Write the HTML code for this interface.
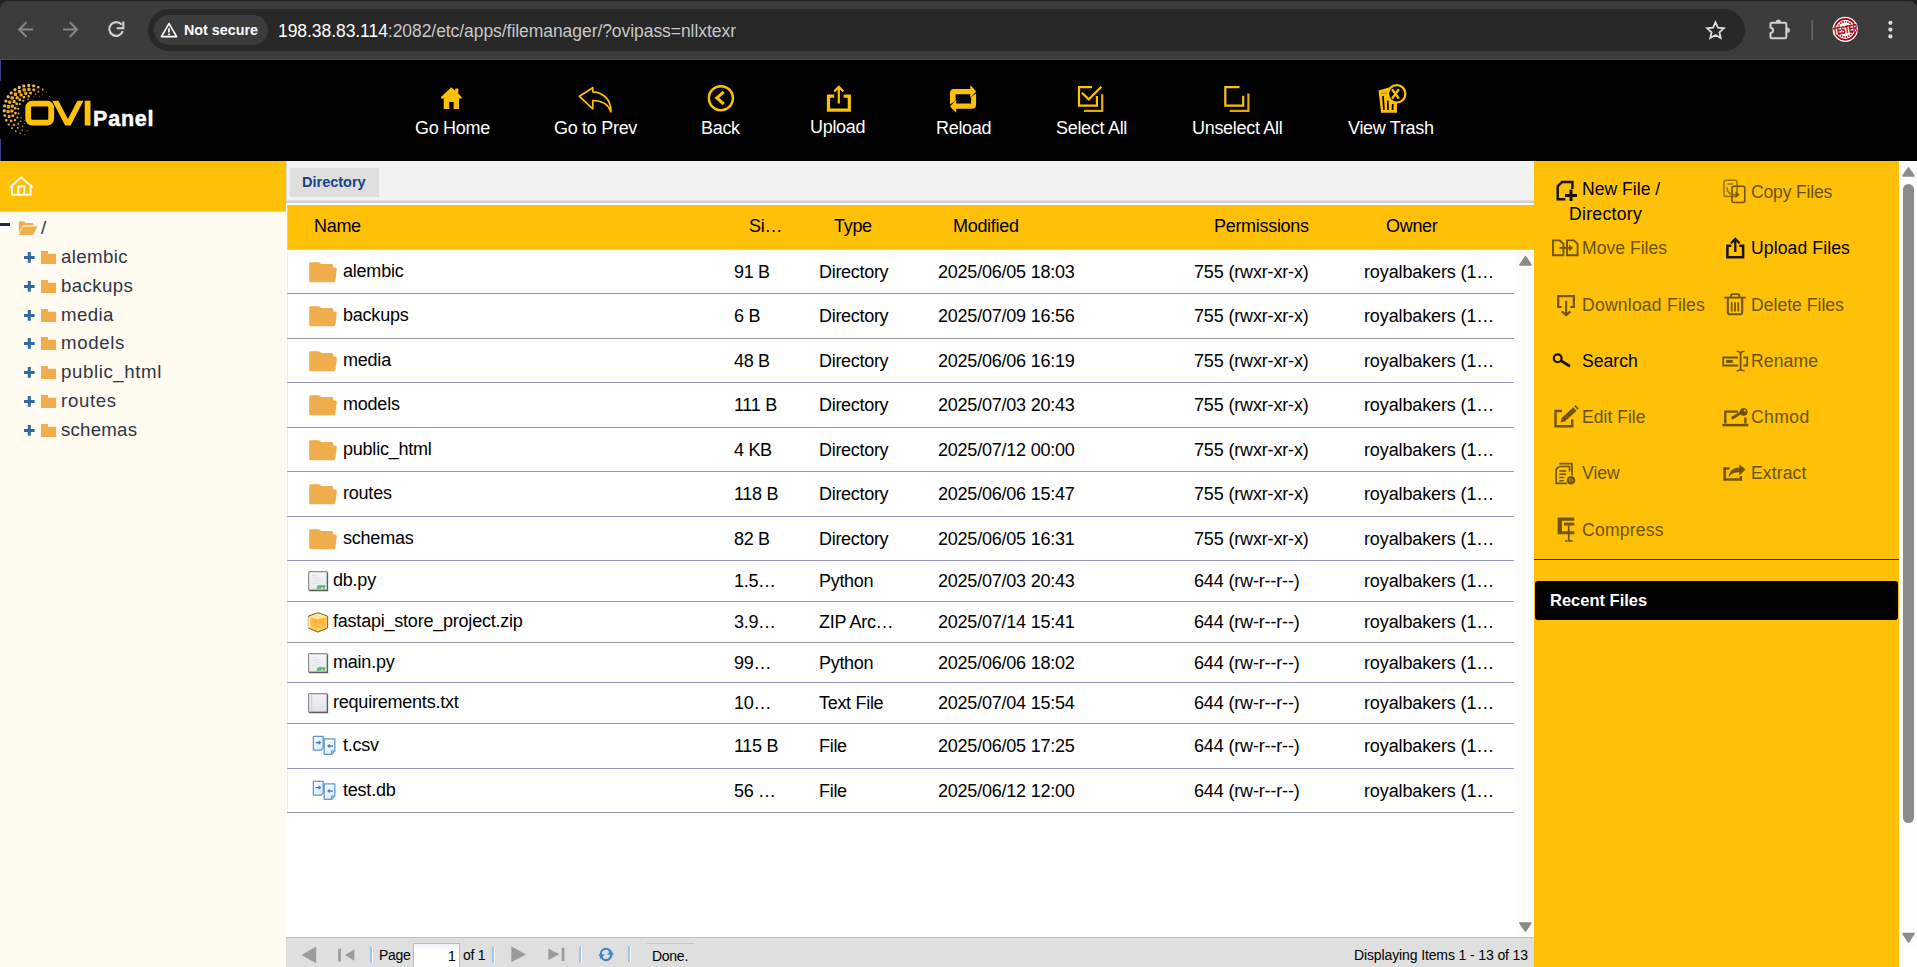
<!DOCTYPE html>
<html>
<head>
<meta charset="utf-8">
<title>File Manager</title>
<style>
*{box-sizing:border-box;margin:0;padding:0}
html,body{width:1917px;height:967px;overflow:hidden;background:#fff}
body{position:relative;font-family:"Liberation Sans",sans-serif;color:#000}
.abs{position:absolute}
svg{display:block;overflow:visible}
/* browser chrome */
#chrome{left:0;top:1px;width:1917px;height:59px;background:#3c3c3c;border-bottom:1px solid #4b4b4b;border-radius:8px 8px 0 0}
#tabstrip{left:0;top:0;width:1917px;height:12px;background:#1f2020}
#omni{left:148px;top:9px;width:1597px;height:42px;border-radius:21px;background:#282828}
#chip{left:154px;top:15px;width:114px;height:30px;border-radius:15px;background:#3c3c3c}
#chip span{position:absolute;left:30px;top:6px;font-size:14.3px;line-height:18px;font-weight:bold;color:#fff;white-space:nowrap}
#url{left:278px;top:20px;font-size:17.5px;letter-spacing:-0.06px;line-height:22px;color:#c7c7c7;white-space:nowrap}
#url b{font-weight:normal;color:#fff}
/* app header */
#hdr{left:0;top:60px;width:1917px;height:101px;background:#000}
.tb{position:absolute;top:117px;color:#fff;font-size:18px;letter-spacing:-0.3px;white-space:nowrap;line-height:22px}
/* left */
#left{left:0;top:161px;width:286px;height:806px;background:#fffbf0}
#lefthd{left:0;top:161px;width:286px;height:50px;background:#ffc107}
.tn{position:absolute;left:61px;font-size:18.67px;letter-spacing:0.4px;color:#2f3545;white-space:nowrap;line-height:24px}
/* center */
#tabbar{left:286px;top:161px;width:1248px;height:41px;background:linear-gradient(#f2f2f2 0,#f2f2f2 38.5px,#dcdcdc 39.5px,#dcdcdc 41px);border-left:1px solid #dadada}
#tabline{left:286px;top:202px;width:1248px;height:3px;background:linear-gradient(#c4c4c4 0,#c4c4c4 1px,#fff 1px,#fff 2px,#eef0f8 3px)}
#tab{left:290px;top:168px;width:89px;height:29px;background:#dedede}
#tab span{position:absolute;left:12px;top:6px;font-size:14.5px;line-height:17px;font-weight:bold;color:#15428b;white-space:nowrap}
#ghd{left:288px;top:205px;width:1246px;height:44px;background:#ffc107}
.gh{position:absolute;top:215px;font-size:18px;letter-spacing:-0.3px;line-height:22px;white-space:nowrap}
#grid{left:286px;top:249px;width:1248px;height:688px;background:#fff}
#gl{left:287px;top:251px;width:1px;height:561px;background:#eee}
#gtop{left:287px;top:249px;width:1247px;height:1px;background:#c9ccdf}
#gleft{left:287px;top:205px;width:1px;height:44px;background:#cdd0e2}
.rl{left:287px;width:1227px;height:1px;background:#9a9ab8}
.c{position:absolute;font-size:18px;letter-spacing:-0.3px;line-height:22px;white-space:nowrap}
#gsb{left:1516px;top:250px;width:17px;height:686px;background:#fcfcfc}
/* pager */
#pager{left:286px;top:937px;width:1248px;height:30px;background:#dfdfdf;border-top:1px solid #c2c2c2}
.pt{position:absolute;font-size:14px;letter-spacing:-0.27px;line-height:18px;white-space:nowrap;color:#000}
.psep{position:absolute;width:3px;background:#9dc3ee;border-right:1.5px solid #fff}
/* right */
#right{left:1534px;top:161px;width:365px;height:806px;background:#ffc107}
.rt{position:absolute;font-size:17.6px;line-height:25px;white-space:nowrap}
.dis{color:#6b5300}
#recent{left:1535px;top:581px;width:363px;height:39px;background:#000;border-radius:3px}
#recent span{position:absolute;left:15px;top:9px;font-size:16.5px;line-height:20px;font-weight:bold;color:#fff;white-space:nowrap}
#sep{left:1534px;top:559px;width:365px;height:1px;background:#1f1f45}
#vsb{left:1899px;top:161px;width:18px;height:786px;background:#fcfcfc}
#thumb{left:1903px;top:184px;width:11px;height:639px;border-radius:5.5px;background:#8b8b8b}

</style>
</head>
<body>
<div id="tabstrip" class="abs"></div>
<div id="chrome" class="abs"></div>
<svg class="abs" style="left:0;top:0" width="160" height="60" viewBox="0 0 160 60">
<g fill="none" stroke="#868686" stroke-width="2.1">
<path d="M33.2 29.5H19.5M26.4 22.3l-7.2 7.2 7.2 7.2"/>
<path d="M63 29.5h13.7M69.8 22.3l7.2 7.2-7.2 7.2"/>
</g>
<path d="M121.6 24.6a6.9 6.9 0 1 0 1.2 6.6" fill="none" stroke="#d2d2d2" stroke-width="2.1"/>
<path d="M123.3 21.6v6.6h-6.6" fill="none" stroke="#d2d2d2" stroke-width="2.1"/>
</svg>
<div id="omni" class="abs"></div>
<div id="chip" class="abs"><span>Not secure</span></div>
<svg class="abs" style="left:158px;top:20px" width="22" height="20" viewBox="0 0 22 20">
<path d="M11 3.6L18.6 16.6H3.4z" fill="none" stroke="#fff" stroke-width="1.7" stroke-linejoin="round"/>
<path d="M11 8.3v4.2M11 13.6v1.7" stroke="#fff" stroke-width="1.7"/>
</svg>
<div id="url" class="abs"><b>198.38.83.114</b>:2082/etc/apps/filemanager/?ovipass=nllxtexr</div>
<svg class="abs" style="left:1700px;top:10px" width="217" height="42" viewBox="0 0 217 42">
<path d="M15.500 12.300l2.450 5.400 5.900.600-4.400 3.950 1.250 5.800-5.200-3-5.200 3 1.250-5.800-4.400-3.950 5.900-.600z" fill="none" stroke="#dcdcdc" stroke-width="1.800" stroke-linejoin="miter"/>
<path d="M71.700 12.800h13.400q1.200 0 1.200 1.200v13.100q0 1.200-1.200 1.200H71.700q-1.200 0-1.200-1.200v-4.100a2.600 2.600 0 0 0 0-5.200v-3.800q0-1.200 1.200-1.200z" fill="none" stroke="#d2d2d2" stroke-width="2" stroke-linejoin="round"/><path d="M75.800 12.100a2.600 2.600 0 0 1 5.200 0z" fill="#d2d2d2"/><path d="M87.200 17.600a2.600 2.600 0 0 1 0 5.200z" fill="#d2d2d2"/>
<rect x="111.300" y="10" width="1.800" height="20" fill="#636363"/>
<circle cx="145.300" cy="19.300" r="12.600" fill="#fff"/>
<circle cx="145.300" cy="19.300" r="10.500" fill="none" stroke="#b5000f" stroke-width="1.700"/>
<circle cx="145.300" cy="19.300" r="7.600" fill="none" stroke="#b5000f" stroke-width="1.600" stroke-dasharray="1.500 1"/>
<rect x="133" y="15.400" width="24.600" height="7.800" fill="#fff" transform="rotate(-10 145.300 19.300)"/>
<text x="145.300" y="23.200" font-family="Liberation Sans, sans-serif" font-weight="bold" font-size="10.500" fill="#a3000d" stroke="#a3000d" stroke-width="0.500" text-anchor="middle" textLength="24.500" lengthAdjust="spacingAndGlyphs" transform="rotate(-10 145.300 19.300)">TESTER</text>
<circle cx="190.400" cy="12.800" r="2.100" fill="#dcdcdc"/>
<circle cx="190.400" cy="19.600" r="2.100" fill="#dcdcdc"/>
<circle cx="190.400" cy="26.400" r="2.100" fill="#dcdcdc"/>
</svg>
<div id="hdr" class="abs"></div>
<div class="abs" style="left:0;top:60px;width:1px;height:21px;background:#3d3d8e"></div>
<div class="abs" style="left:0;top:139px;width:1px;height:22px;background:#3d3d8e"></div>
<svg class="abs" style="left:0;top:60px" width="170" height="100" viewBox="0 60 170 100">
<rect x="49.1" y="95.9" width="0.9" height="0.9" rx="0.3" fill="#e0bd6e" opacity="0.61"/><rect x="45.9" y="92.1" width="1.0" height="1.0" rx="0.3" fill="#e0bd6e" opacity="0.64"/><rect x="41.8" y="88.6" width="1.8" height="1.8" rx="0.5" fill="#e0bd6e" opacity="0.83"/><rect x="37.1" y="86.0" width="2.4" height="2.4" rx="0.7" fill="#e0bd6e" opacity="0.99"/><rect x="32.2" y="84.4" width="2.9" height="2.9" rx="0.9" fill="#e0bd6e" opacity="1.00"/><rect x="27.3" y="84.0" width="2.9" height="2.9" rx="0.9" fill="#e0bd6e" opacity="1.00"/><rect x="22.4" y="84.5" width="2.9" height="2.9" rx="0.9" fill="#e0bd6e" opacity="1.00"/><rect x="17.8" y="86.0" width="2.9" height="2.9" rx="0.9" fill="#e0bd6e" opacity="1.00"/><rect x="13.5" y="88.3" width="2.9" height="2.9" rx="0.9" fill="#e0bd6e" opacity="1.00"/><rect x="9.7" y="91.5" width="2.9" height="2.9" rx="0.9" fill="#e0bd6e" opacity="1.00"/><rect x="6.7" y="95.3" width="2.9" height="2.9" rx="0.9" fill="#e0bd6e" opacity="1.00"/><rect x="4.5" y="99.7" width="2.9" height="2.9" rx="0.9" fill="#e0bd6e" opacity="1.00"/><rect x="3.1" y="104.4" width="2.9" height="2.9" rx="0.9" fill="#e0bd6e" opacity="1.00"/><rect x="2.8" y="109.3" width="2.9" height="2.9" rx="0.9" fill="#e0bd6e" opacity="1.00"/><rect x="3.5" y="114.2" width="2.6" height="2.6" rx="0.8" fill="#e0bd6e" opacity="1.00"/><rect x="5.1" y="119.0" width="2.4" height="2.4" rx="0.7" fill="#e0bd6e" opacity="0.98"/><rect x="7.6" y="123.4" width="2.2" height="2.2" rx="0.7" fill="#e0bd6e" opacity="0.92"/><rect x="10.9" y="127.2" width="1.9" height="1.9" rx="0.6" fill="#e0bd6e" opacity="0.87"/><rect x="14.9" y="130.3" width="1.7" height="1.7" rx="0.5" fill="#e0bd6e" opacity="0.81"/><rect x="19.4" y="132.6" width="1.5" height="1.5" rx="0.4" fill="#e0bd6e" opacity="0.76"/><rect x="24.2" y="134.0" width="1.3" height="1.3" rx="0.4" fill="#e0bd6e" opacity="0.70"/><rect x="42.0" y="93.8" width="1.0" height="1.0" rx="0.3" fill="#f3a822" opacity="0.61"/><rect x="37.5" y="90.6" width="1.9" height="1.9" rx="0.6" fill="#f3a822" opacity="0.80"/><rect x="32.4" y="88.4" width="2.9" height="2.9" rx="0.9" fill="#f3a822" opacity="1.00"/><rect x="27.3" y="87.7" width="3.3" height="3.3" rx="1.0" fill="#f3a822" opacity="1.00"/><rect x="22.5" y="88.2" width="3.3" height="3.3" rx="1.0" fill="#f3a822" opacity="1.00"/><rect x="17.9" y="89.9" width="3.3" height="3.3" rx="1.0" fill="#f3a822" opacity="1.00"/><rect x="13.8" y="92.6" width="3.3" height="3.3" rx="1.0" fill="#f3a822" opacity="1.00"/><rect x="10.5" y="96.2" width="3.3" height="3.3" rx="1.0" fill="#f3a822" opacity="1.00"/><rect x="8.1" y="100.4" width="3.3" height="3.3" rx="1.0" fill="#f3a822" opacity="1.00"/><rect x="6.7" y="105.1" width="3.3" height="3.3" rx="1.0" fill="#f3a822" opacity="1.00"/><rect x="6.5" y="110.1" width="3.2" height="3.2" rx="1.0" fill="#f3a822" opacity="1.00"/><rect x="7.6" y="115.0" width="2.9" height="2.9" rx="0.9" fill="#f3a822" opacity="1.00"/><rect x="9.8" y="119.6" width="2.6" height="2.6" rx="0.8" fill="#f3a822" opacity="0.95"/><rect x="12.9" y="123.7" width="2.3" height="2.3" rx="0.7" fill="#f3a822" opacity="0.88"/><rect x="16.9" y="126.9" width="1.9" height="1.9" rx="0.6" fill="#f3a822" opacity="0.81"/><rect x="21.5" y="129.2" width="1.6" height="1.6" rx="0.5" fill="#f3a822" opacity="0.74"/><rect x="26.4" y="130.3" width="1.4" height="1.4" rx="0.4" fill="#f3a822" opacity="0.69"/><rect x="39.1" y="96.2" width="0.9" height="0.9" rx="0.3" fill="#f7ae1c" opacity="0.61"/><rect x="34.6" y="93.4" width="1.6" height="1.6" rx="0.5" fill="#f7ae1c" opacity="0.75"/><rect x="29.2" y="91.7" width="2.7" height="2.7" rx="0.8" fill="#f7ae1c" opacity="1.00"/><rect x="24.2" y="91.8" width="3.1" height="3.1" rx="0.9" fill="#f7ae1c" opacity="1.00"/><rect x="19.6" y="93.4" width="3.1" height="3.1" rx="0.9" fill="#f7ae1c" opacity="1.00"/><rect x="15.6" y="96.2" width="3.1" height="3.1" rx="0.9" fill="#f7ae1c" opacity="1.00"/><rect x="12.6" y="100.0" width="3.1" height="3.1" rx="0.9" fill="#f7ae1c" opacity="1.00"/><rect x="10.7" y="104.6" width="3.1" height="3.1" rx="0.9" fill="#f7ae1c" opacity="1.00"/><rect x="10.3" y="109.4" width="3.1" height="3.1" rx="0.9" fill="#f7ae1c" opacity="1.00"/><rect x="11.4" y="114.4" width="2.7" height="2.7" rx="0.8" fill="#f7ae1c" opacity="1.00"/><rect x="13.8" y="119.0" width="2.3" height="2.3" rx="0.7" fill="#f7ae1c" opacity="0.93"/><rect x="17.3" y="122.7" width="2.0" height="2.0" rx="0.6" fill="#f7ae1c" opacity="0.84"/><rect x="21.7" y="125.4" width="1.6" height="1.6" rx="0.5" fill="#f7ae1c" opacity="0.75"/><rect x="33.0" y="96.6" width="0.9" height="0.9" rx="0.3" fill="#f0b232" opacity="0.65"/><rect x="27.6" y="95.2" width="2.3" height="2.3" rx="0.7" fill="#f0b232" opacity="1.00"/><rect x="22.6" y="96.0" width="2.6" height="2.6" rx="0.8" fill="#f0b232" opacity="1.00"/><rect x="18.5" y="98.5" width="2.6" height="2.6" rx="0.8" fill="#f0b232" opacity="1.00"/><rect x="15.4" y="102.4" width="2.6" height="2.6" rx="0.8" fill="#f0b232" opacity="1.00"/><rect x="13.9" y="107.0" width="2.6" height="2.6" rx="0.8" fill="#f0b232" opacity="1.00"/><rect x="14.2" y="111.9" width="2.5" height="2.5" rx="0.7" fill="#f0b232" opacity="1.00"/><rect x="16.3" y="116.6" width="2.0" height="2.0" rx="0.6" fill="#f0b232" opacity="0.95"/><rect x="19.8" y="120.5" width="1.6" height="1.6" rx="0.5" fill="#f0b232" opacity="0.83"/><rect x="24.3" y="122.9" width="1.2" height="1.2" rx="0.4" fill="#f0b232" opacity="0.72"/><rect x="32.5" y="99.6" width="0.6" height="0.6" rx="0.2" fill="#d9a73a" opacity="0.61"/><rect x="27.2" y="98.5" width="1.6" height="1.6" rx="0.5" fill="#d9a73a" opacity="0.95"/><rect x="22.3" y="99.8" width="2.0" height="2.0" rx="0.6" fill="#d9a73a" opacity="1.00"/><rect x="18.8" y="103.1" width="2.0" height="2.0" rx="0.6" fill="#d9a73a" opacity="1.00"/><rect x="17.1" y="107.7" width="2.0" height="2.0" rx="0.6" fill="#d9a73a" opacity="1.00"/><rect x="17.6" y="112.6" width="1.8" height="1.8" rx="0.5" fill="#d9a73a" opacity="1.00"/><rect x="20.3" y="117.0" width="1.4" height="1.4" rx="0.4" fill="#d9a73a" opacity="0.89"/><rect x="24.5" y="120.0" width="1.0" height="1.0" rx="0.3" fill="#d9a73a" opacity="0.73"/>
<rect x="28.200" y="103.600" width="23" height="19" rx="3.800" fill="none" stroke="#ffc107" stroke-width="5.800"/>
<path d="M52.300 100.700h6.100l9.500 18.300 9.500-18.300h6.100l-12.900 24.800h-5.400z" fill="#ffc107"/>
<rect x="84.700" y="100.700" width="5.800" height="24.800" fill="#ffc107"/>
</svg>
<div class="abs" style="left:93px;top:106px;font-size:21.500px;line-height:26px;font-weight:bold;color:#fff;letter-spacing:0.800px;white-space:nowrap;-webkit-text-stroke:0.500px #fff">Panel</div>
<svg class="abs" style="left:400px;top:78px" width="1100" height="40" viewBox="400 78 1100 40">
<g fill="#ffc107">
<path d="M451.300 87.200l3.900 3.600v-2.300h3.100v5.200l3.400 3.200v1.500h-2.700v10.700h-5.400v-7.100h-4.400v7.100h-5.500v-10.700h-2.700v-1.500z"/>
</g>
<g fill="none" stroke="#ffc107" stroke-width="1.700" stroke-linejoin="round">
<path d="M579.400 96.300l13.400-8.600v4.100c10.500.6 18.200 7.800 18.200 20-2.600-7.300-9.300-11.300-18.200-11.300v8.300z"/>
</g>
<circle cx="720.900" cy="98.200" r="12" fill="none" stroke="#ffc107" stroke-width="2.500"/>
<path d="M723.800 91.800l-7 6.100 7 6.100" fill="none" stroke="#ffc107" stroke-width="3"/>
<g fill="none" stroke="#ffc107">
<path d="M834.200 96.200h-5.700v13.900h20.800v-13.900h-5.700" stroke-width="3.200"/>
<path d="M838.800 103.600v-16.500" stroke-width="2.200"/>
<path d="M834.200 91.500l4.600-4.700 4.600 4.700" stroke-width="2.200"/>
</g>
<g fill="#ffc107">
<path d="M954 89h16.300v-3.900l5.900 6.300-5.900 6.300v-3.500h-14.700v6.500l-5.600 3.700v-11.400q0-4 4-4z"/>
<path d="M972 108.800h-15.800v3.900l-6.200-6.300 6.200-6.300v3.500h14.900v-6.500l5-3.700v11.400q0 4-4.100 4z"/>
</g>
<g fill="none" stroke="#ffc107">
<path d="M1092 87.200h-13v18.400h17.900v-9.600" stroke-width="2.200"/>
<path d="M1084 110.900h18.200v-16.700" stroke-width="2.200" stroke="#e0aa06"/>
<path d="M1082 92.700l6.700 6.700 12.700-12.600" stroke-width="2.200"/>
<path d="M1239.500 87.200h-14.200v18.400h17.900v-9.900" stroke-width="2.200"/>
<path d="M1229.600 110.900h18.800v-17.300" stroke-width="2.200" stroke="#e0aa06"/>
</g>
<g>
<path d="M1378.500 90.600l10.500-3.200 8 5.500v19.900h-15.900z" fill="#ffc107"/>
<path d="M1380.800 93.600l7-.8" stroke="#b88a00" stroke-width="1" fill="none"/>
<path d="M1383 96l.9 14M1387.800 100.500l.2 9.500M1392.800 104l-.3 6" stroke="#000" stroke-width="1.700" fill="none"/>
<circle cx="1396.700" cy="93.800" r="8.700" fill="#000" stroke="#ffc107" stroke-width="2.200"/>
<path d="M1392 89.300l6.900 9.300M1398.900 89.300l-6.900 9.300" stroke="#ffc107" stroke-width="2.400" fill="none"/>
</g>
</svg>
<div class="tb" style="left:415px">Go Home</div>
<div class="tb" style="left:554px">Go to Prev</div>
<div class="tb" style="left:701px">Back</div>
<div class="tb" style="left:810px;top:116px">Upload</div>
<div class="tb" style="left:936px">Reload</div>
<div class="tb" style="left:1056px">Select All</div>
<div class="tb" style="left:1192px">Unselect All</div>
<div class="tb" style="left:1348px">View Trash</div>
<div id="left" class="abs"></div>
<div id="lefthd" class="abs"></div>
<div class="abs" style="left:0;top:211px;width:286px;height:1px;background:#d8d3c4"></div>
<svg class="abs" style="left:8px;top:174px" width="28" height="24" viewBox="8 174 28 24">
<g fill="none" stroke="#fffbe8" stroke-width="2">
<path d="M9.800 187.600l11.400-10.300 11.400 10.300"/>
<path d="M12 185.800v9h18.600v-9"/>
<path d="M18.300 194.800v-8.400h5.800v8.400"/>
</g>
</svg>
<div class="abs" style="left:0;top:218px;width:11px;height:13px;background:#fff"></div>
<div class="abs" style="left:0;top:223px;width:10px;height:3px;background:#2b2b33"></div>
<svg class="abs" style="left:18px;top:221px" width="20" height="15" viewBox="0 0 20 15">
<path d="M1.400 0.300h4.600l1.700 1.700h6.600q1 0 1 1v1.500h-9.300q-1 0-1.500.9l-3.700 6.800v-10.900q0-1 1-1z" fill="#efad4c"/>
<path d="M6 5.600h12.600q.9 0 .4.900l-3.600 6.700q-.5.900-1.500.9H1.600q-.9 0-.4-.900l3.400-6.600q.5-1 1.400-1z" fill="#efad4c"/>
</svg>
<div class="tn" style="left:41px;top:216px">/</div>
<svg class="abs" style="left:24px;top:251px" width="33" height="14" viewBox="0 0 33 14"><path d="M0 6.500h10.600M5.300 1.100v10.600" stroke="#2f6ca3" stroke-width="3.100" fill="none"/><path d="M17 0.100h6.500q.6 0 .6.600v2h7.300q.700 0 .700.700v8.900q0 .6-.6.600H17.600q-.6 0-.6-.6z" fill="#efad4c"/></svg>
<div class="tn" style="top:245px;letter-spacing:0.4px">alembic</div>
<svg class="abs" style="left:24px;top:280px" width="33" height="14" viewBox="0 0 33 14"><path d="M0 6.500h10.600M5.300 1.100v10.600" stroke="#2f6ca3" stroke-width="3.100" fill="none"/><path d="M17 0.100h6.500q.6 0 .6.600v2h7.300q.700 0 .700.700v8.900q0 .6-.6.600H17.600q-.6 0-.6-.6z" fill="#efad4c"/></svg>
<div class="tn" style="top:274px;letter-spacing:0.4px">backups</div>
<svg class="abs" style="left:24px;top:309px" width="33" height="14" viewBox="0 0 33 14"><path d="M0 6.500h10.600M5.300 1.100v10.600" stroke="#2f6ca3" stroke-width="3.100" fill="none"/><path d="M17 0.100h6.500q.6 0 .6.600v2h7.300q.700 0 .700.700v8.900q0 .6-.6.600H17.600q-.6 0-.6-.6z" fill="#efad4c"/></svg>
<div class="tn" style="top:303px;letter-spacing:0.4px">media</div>
<svg class="abs" style="left:24px;top:337px" width="33" height="14" viewBox="0 0 33 14"><path d="M0 6.500h10.600M5.300 1.100v10.600" stroke="#2f6ca3" stroke-width="3.100" fill="none"/><path d="M17 0.100h6.500q.6 0 .6.600v2h7.300q.700 0 .700.700v8.900q0 .6-.6.600H17.600q-.6 0-.6-.6z" fill="#efad4c"/></svg>
<div class="tn" style="top:331px;letter-spacing:0.63px">models</div>
<svg class="abs" style="left:24px;top:366px" width="33" height="14" viewBox="0 0 33 14"><path d="M0 6.500h10.600M5.300 1.100v10.600" stroke="#2f6ca3" stroke-width="3.100" fill="none"/><path d="M17 0.100h6.500q.6 0 .6.600v2h7.300q.700 0 .700.700v8.900q0 .6-.6.600H17.600q-.6 0-.6-.6z" fill="#efad4c"/></svg>
<div class="tn" style="top:360px;letter-spacing:0.6px">public_html</div>
<svg class="abs" style="left:24px;top:395px" width="33" height="14" viewBox="0 0 33 14"><path d="M0 6.500h10.600M5.300 1.100v10.600" stroke="#2f6ca3" stroke-width="3.100" fill="none"/><path d="M17 0.100h6.500q.6 0 .6.600v2h7.300q.700 0 .700.700v8.900q0 .6-.6.600H17.600q-.6 0-.6-.6z" fill="#efad4c"/></svg>
<div class="tn" style="top:389px;letter-spacing:0.67px">routes</div>
<svg class="abs" style="left:24px;top:424px" width="33" height="14" viewBox="0 0 33 14"><path d="M0 6.500h10.600M5.300 1.100v10.600" stroke="#2f6ca3" stroke-width="3.100" fill="none"/><path d="M17 0.100h6.500q.6 0 .6.600v2h7.300q.700 0 .700.700v8.900q0 .6-.6.600H17.600q-.6 0-.6-.6z" fill="#efad4c"/></svg>
<div class="tn" style="top:418px;letter-spacing:0.23px">schemas</div>
<div id="tabbar" class="abs"></div>
<div id="tabline" class="abs"></div>
<div id="tab" class="abs"><span>Directory</span></div>
<div id="ghd" class="abs"></div>
<div class="gh" style="left:314px">Name</div>
<div class="gh" style="left:749px">Si…</div>
<div class="gh" style="left:834px">Type</div>
<div class="gh" style="left:953px">Modified</div>
<div class="gh" style="left:1214px">Permissions</div>
<div class="gh" style="left:1386px">Owner</div>
<div id="grid" class="abs"></div>
<div id="gl" class="abs"></div>
<div id="gtop" class="abs"></div>
<div id="gleft" class="abs"></div>
<div id="gsb" class="abs"></div>
<svg class="abs" style="left:1516px;top:250px" width="17" height="686" viewBox="1516 250 17 686">
<path d="M1525.500 256.600l5.600 8.300h-11.200z" fill="#8b8b8b" stroke="#8b8b8b" stroke-width="1.600" stroke-linejoin="round"/>
<path d="M1525.400 931l-5.500-8h11z" fill="#8b8b8b" stroke="#8b8b8b" stroke-width="1.600" stroke-linejoin="round"/>
</svg>
<svg width="0" height="0" style="position:absolute"><defs><linearGradient id="gdoc" x1="0" y1="0" x2="1" y2="1"><stop offset="0" stop-color="#ffffff"/><stop offset="1" stop-color="#d5e6f7"/></linearGradient><linearGradient id="gpy" x1="0" y1="0" x2="0" y2="1"><stop offset="0" stop-color="#f4f5f6"/><stop offset="1" stop-color="#e6e8ea"/></linearGradient><linearGradient id="gtxt" x1="0" y1="0" x2="0" y2="1"><stop offset="0" stop-color="#f1f1f6"/><stop offset="1" stop-color="#e2e3ea"/></linearGradient><radialGradient id="gzip" cx="0.5" cy="0.45" r="0.65"><stop offset="0" stop-color="#ffa726"/><stop offset="0.55" stop-color="#ffc24a"/><stop offset="1" stop-color="#ffe49a"/></radialGradient></defs></svg>
<div class="rl abs" style="top:293px"></div>
<svg class="abs" style="left:309px;top:262px" width="28" height="21" viewBox="0 0 28 21"><path d="M1.600 0.200h7.700q.9 0 1.500.6l1.300 1.200h10.400q1.800 0 1.800 1.700v1.700h1.700q2.100 0 1.800 2l-1.500 11.300q-.3 1.600-2 1.600H1.700q-1.500 0-1.500-1.500V1.600q0-1.400 1.400-1.400z" fill="#efad4c"/></svg>
<div class="c" style="left:343px;top:260px;letter-spacing:-0.22px">alembic</div><div class="c" style="left:734px;top:261px">91 B</div><div class="c" style="left:819px;top:261px">Directory</div><div class="c" style="left:938px;top:261px;letter-spacing:-0.22px">2025/06/05 18:03</div><div class="c" style="left:1194px;top:261px;letter-spacing:-0.16px">755 (rwxr-xr-x)</div><div class="c" style="left:1364px;top:261px;letter-spacing:-0.12px">royalbakers (1…</div>
<div class="rl abs" style="top:338px"></div>
<svg class="abs" style="left:309px;top:306px" width="28" height="21" viewBox="0 0 28 21"><path d="M1.600 0.200h7.700q.9 0 1.500.6l1.300 1.200h10.400q1.800 0 1.800 1.700v1.700h1.700q2.100 0 1.800 2l-1.500 11.300q-.3 1.600-2 1.600H1.700q-1.500 0-1.500-1.500V1.600q0-1.400 1.400-1.400z" fill="#efad4c"/></svg>
<div class="c" style="left:343px;top:304px;letter-spacing:-0.22px">backups</div><div class="c" style="left:734px;top:305px">6 B</div><div class="c" style="left:819px;top:305px">Directory</div><div class="c" style="left:938px;top:305px;letter-spacing:-0.22px">2025/07/09 16:56</div><div class="c" style="left:1194px;top:305px;letter-spacing:-0.16px">755 (rwxr-xr-x)</div><div class="c" style="left:1364px;top:305px;letter-spacing:-0.12px">royalbakers (1…</div>
<div class="rl abs" style="top:382px"></div>
<svg class="abs" style="left:309px;top:351px" width="28" height="21" viewBox="0 0 28 21"><path d="M1.600 0.200h7.700q.9 0 1.500.6l1.300 1.200h10.400q1.800 0 1.800 1.700v1.700h1.700q2.100 0 1.800 2l-1.500 11.300q-.3 1.600-2 1.600H1.700q-1.500 0-1.500-1.500V1.600q0-1.400 1.400-1.400z" fill="#efad4c"/></svg>
<div class="c" style="left:343px;top:349px;letter-spacing:-0.22px">media</div><div class="c" style="left:734px;top:350px">48 B</div><div class="c" style="left:819px;top:350px">Directory</div><div class="c" style="left:938px;top:350px;letter-spacing:-0.22px">2025/06/06 16:19</div><div class="c" style="left:1194px;top:350px;letter-spacing:-0.16px">755 (rwxr-xr-x)</div><div class="c" style="left:1364px;top:350px;letter-spacing:-0.12px">royalbakers (1…</div>
<div class="rl abs" style="top:427px"></div>
<svg class="abs" style="left:309px;top:395px" width="28" height="21" viewBox="0 0 28 21"><path d="M1.600 0.200h7.700q.9 0 1.500.6l1.300 1.200h10.400q1.800 0 1.800 1.700v1.700h1.700q2.100 0 1.800 2l-1.500 11.300q-.3 1.600-2 1.600H1.700q-1.500 0-1.500-1.500V1.600q0-1.400 1.400-1.400z" fill="#efad4c"/></svg>
<div class="c" style="left:343px;top:393px;letter-spacing:-0.22px">models</div><div class="c" style="left:734px;top:394px">111 B</div><div class="c" style="left:819px;top:394px">Directory</div><div class="c" style="left:938px;top:394px;letter-spacing:-0.22px">2025/07/03 20:43</div><div class="c" style="left:1194px;top:394px;letter-spacing:-0.16px">755 (rwxr-xr-x)</div><div class="c" style="left:1364px;top:394px;letter-spacing:-0.12px">royalbakers (1…</div>
<div class="rl abs" style="top:471px"></div>
<svg class="abs" style="left:309px;top:440px" width="28" height="21" viewBox="0 0 28 21"><path d="M1.600 0.200h7.700q.9 0 1.500.6l1.300 1.200h10.400q1.800 0 1.800 1.700v1.700h1.700q2.100 0 1.800 2l-1.500 11.300q-.3 1.600-2 1.600H1.700q-1.500 0-1.500-1.500V1.600q0-1.400 1.400-1.400z" fill="#efad4c"/></svg>
<div class="c" style="left:343px;top:438px;letter-spacing:-0.22px">public_html</div><div class="c" style="left:734px;top:439px">4 KB</div><div class="c" style="left:819px;top:439px">Directory</div><div class="c" style="left:938px;top:439px;letter-spacing:-0.22px">2025/07/12 00:00</div><div class="c" style="left:1194px;top:439px;letter-spacing:-0.16px">755 (rwxr-xr-x)</div><div class="c" style="left:1364px;top:439px;letter-spacing:-0.12px">royalbakers (1…</div>
<div class="rl abs" style="top:516px"></div>
<svg class="abs" style="left:309px;top:484px" width="28" height="21" viewBox="0 0 28 21"><path d="M1.600 0.200h7.700q.9 0 1.500.6l1.300 1.200h10.400q1.800 0 1.800 1.700v1.700h1.700q2.100 0 1.800 2l-1.500 11.300q-.3 1.600-2 1.600H1.700q-1.500 0-1.500-1.500V1.600q0-1.400 1.400-1.400z" fill="#efad4c"/></svg>
<div class="c" style="left:343px;top:482px;letter-spacing:-0.22px">routes</div><div class="c" style="left:734px;top:483px">118 B</div><div class="c" style="left:819px;top:483px">Directory</div><div class="c" style="left:938px;top:483px;letter-spacing:-0.22px">2025/06/06 15:47</div><div class="c" style="left:1194px;top:483px;letter-spacing:-0.16px">755 (rwxr-xr-x)</div><div class="c" style="left:1364px;top:483px;letter-spacing:-0.12px">royalbakers (1…</div>
<div class="rl abs" style="top:560px"></div>
<svg class="abs" style="left:309px;top:529px" width="28" height="21" viewBox="0 0 28 21"><path d="M1.600 0.200h7.700q.9 0 1.500.6l1.300 1.200h10.400q1.800 0 1.800 1.700v1.700h1.700q2.100 0 1.800 2l-1.500 11.300q-.3 1.600-2 1.600H1.700q-1.500 0-1.500-1.500V1.600q0-1.400 1.400-1.400z" fill="#efad4c"/></svg>
<div class="c" style="left:343px;top:527px;letter-spacing:-0.22px">schemas</div><div class="c" style="left:734px;top:528px">82 B</div><div class="c" style="left:819px;top:528px">Directory</div><div class="c" style="left:938px;top:528px;letter-spacing:-0.22px">2025/06/05 16:31</div><div class="c" style="left:1194px;top:528px;letter-spacing:-0.16px">755 (rwxr-xr-x)</div><div class="c" style="left:1364px;top:528px;letter-spacing:-0.12px">royalbakers (1…</div>
<div class="rl abs" style="top:601px"></div>
<svg class="abs" style="left:308px;top:571px" width="21" height="21" viewBox="0 0 21 21"><rect x="0.600" y="0.600" width="18.800" height="18.800" rx="1.200" fill="url(#gpy)" stroke="#8e8e8e" stroke-width="1.200"/><path d="M19.500 1.500v18H1.500" fill="none" stroke="#5c5c5c" stroke-width="1.300"/><path d="M4 4.500h5M4 7h9M6 9.500h8M4 12h7" stroke="#dfe2e6" stroke-width="1"/><path d="M9.800 14.200h7.800l-.8 3.600h-2l.3-1.600h-1.600l-.4 1.600h-4.600z" fill="#4bb05d" opacity="0.900"/></svg>
<div class="c" style="left:333px;top:569px;letter-spacing:-0.22px">db.py</div><div class="c" style="left:734px;top:570px">1.5…</div><div class="c" style="left:819px;top:570px">Python</div><div class="c" style="left:938px;top:570px;letter-spacing:-0.22px">2025/07/03 20:43</div><div class="c" style="left:1194px;top:570px;letter-spacing:-0.16px">644 (rw-r--r--)</div><div class="c" style="left:1364px;top:570px;letter-spacing:-0.12px">royalbakers (1…</div>
<div class="rl abs" style="top:642px"></div>
<svg class="abs" style="left:307px;top:612px" width="22" height="21" viewBox="0 0 22 21"><path d="M11 0.800l8.600 3q1 .4 1 1.400v9.800q0 1-1 1.400l-8.600 3.500-8.600-3.500q-1-.4-1-1.400V5.200q0-1 1-1.400z" fill="url(#gzip)" stroke="#8f6a33" stroke-width="1.100" stroke-linejoin="round"/><path d="M11 1.400l8.800 3.300-8.800 2.900-8.800-2.900z" fill="#fff0b8" opacity="0.850"/><path d="M11 7.600v11.800" stroke="#ffcf63" stroke-width="1" opacity="0.700"/><path d="M2 5.200v10.500" stroke="#fff6d0" stroke-width="1.600" opacity="0.900"/></svg>
<div class="c" style="left:333px;top:610px;letter-spacing:-0.22px">fastapi_store_project.zip</div><div class="c" style="left:734px;top:611px">3.9…</div><div class="c" style="left:819px;top:611px">ZIP Arc…</div><div class="c" style="left:938px;top:611px;letter-spacing:-0.22px">2025/07/14 15:41</div><div class="c" style="left:1194px;top:611px;letter-spacing:-0.16px">644 (rw-r--r--)</div><div class="c" style="left:1364px;top:611px;letter-spacing:-0.12px">royalbakers (1…</div>
<div class="rl abs" style="top:682px"></div>
<svg class="abs" style="left:308px;top:653px" width="21" height="21" viewBox="0 0 21 21"><rect x="0.600" y="0.600" width="18.800" height="18.800" rx="1.200" fill="url(#gpy)" stroke="#8e8e8e" stroke-width="1.200"/><path d="M19.500 1.500v18H1.500" fill="none" stroke="#5c5c5c" stroke-width="1.300"/><path d="M4 4.500h5M4 7h9M6 9.500h8M4 12h7" stroke="#dfe2e6" stroke-width="1"/><path d="M9.800 14.200h7.800l-.8 3.600h-2l.3-1.600h-1.600l-.4 1.600h-4.600z" fill="#4bb05d" opacity="0.900"/></svg>
<div class="c" style="left:333px;top:651px;letter-spacing:-0.22px">main.py</div><div class="c" style="left:734px;top:652px">99…</div><div class="c" style="left:819px;top:652px">Python</div><div class="c" style="left:938px;top:652px;letter-spacing:-0.22px">2025/06/06 18:02</div><div class="c" style="left:1194px;top:652px;letter-spacing:-0.16px">644 (rw-r--r--)</div><div class="c" style="left:1364px;top:652px;letter-spacing:-0.12px">royalbakers (1…</div>
<div class="rl abs" style="top:723px"></div>
<svg class="abs" style="left:308px;top:693px" width="21" height="21" viewBox="0 0 21 21"><rect x="0.600" y="0.600" width="18.800" height="18.800" rx="1.200" fill="url(#gtxt)" stroke="#8e8e8e" stroke-width="1.200"/><path d="M19.500 1.500v18H1.500" fill="none" stroke="#5c5c5c" stroke-width="1.300"/><path d="M3.700 1.500v17" stroke="#e3b9ef" stroke-width="1"/></svg>
<div class="c" style="left:333px;top:691px;letter-spacing:-0.22px">requirements.txt</div><div class="c" style="left:734px;top:692px">10…</div><div class="c" style="left:819px;top:692px">Text File</div><div class="c" style="left:938px;top:692px;letter-spacing:-0.22px">2025/07/04 15:54</div><div class="c" style="left:1194px;top:692px;letter-spacing:-0.16px">644 (rw-r--r--)</div><div class="c" style="left:1364px;top:692px;letter-spacing:-0.12px">royalbakers (1…</div>
<div class="rl abs" style="top:768px"></div>
<svg class="abs" style="left:312px;top:735px" width="25" height="21" viewBox="0 0 25 21"><path d="M1.400 1.400h9.800v11.500l-2 2.200H1.400z" fill="url(#gdoc)" stroke="#5f97cf" stroke-width="1.300" stroke-linejoin="round"/><path d="M12.200 3.900h10.600v12.100l-3.200 3.400h-7.400z" fill="url(#gdoc)" stroke="#5f97cf" stroke-width="1.300" stroke-linejoin="round"/><path d="M22.800 16h-3.200v3.400" fill="none" stroke="#5f97cf" stroke-width="1.100"/><path d="M3.600 7.600h4.200" stroke="#3f7fc4" stroke-width="1.500"/><path d="M6.700 5.300l2.700 2.300-2.700 2.300z" fill="#3f7fc4"/><path d="M20.800 11h-4.200" stroke="#3f7fc4" stroke-width="1.500"/><path d="M17.700 8.700l-2.700 2.300 2.700 2.300z" fill="#3f7fc4"/></svg>
<div class="c" style="left:343px;top:734px;letter-spacing:-0.22px">t.csv</div><div class="c" style="left:734px;top:735px">115 B</div><div class="c" style="left:819px;top:735px">File</div><div class="c" style="left:938px;top:735px;letter-spacing:-0.22px">2025/06/05 17:25</div><div class="c" style="left:1194px;top:735px;letter-spacing:-0.16px">644 (rw-r--r--)</div><div class="c" style="left:1364px;top:735px;letter-spacing:-0.12px">royalbakers (1…</div>
<div class="rl abs" style="top:812px"></div>
<svg class="abs" style="left:312px;top:780px" width="25" height="21" viewBox="0 0 25 21"><path d="M1.400 1.400h9.800v11.500l-2 2.200H1.400z" fill="url(#gdoc)" stroke="#5f97cf" stroke-width="1.300" stroke-linejoin="round"/><path d="M12.200 3.900h10.600v12.100l-3.200 3.400h-7.400z" fill="url(#gdoc)" stroke="#5f97cf" stroke-width="1.300" stroke-linejoin="round"/><path d="M22.800 16h-3.200v3.400" fill="none" stroke="#5f97cf" stroke-width="1.100"/><path d="M3.600 7.600h4.200" stroke="#3f7fc4" stroke-width="1.500"/><path d="M6.700 5.300l2.700 2.300-2.700 2.300z" fill="#3f7fc4"/><path d="M20.800 11h-4.200" stroke="#3f7fc4" stroke-width="1.500"/><path d="M17.700 8.700l-2.700 2.300 2.700 2.300z" fill="#3f7fc4"/></svg>
<div class="c" style="left:343px;top:779px;letter-spacing:-0.22px">test.db</div><div class="c" style="left:734px;top:780px">56 …</div><div class="c" style="left:819px;top:780px">File</div><div class="c" style="left:938px;top:780px;letter-spacing:-0.22px">2025/06/12 12:00</div><div class="c" style="left:1194px;top:780px;letter-spacing:-0.16px">644 (rw-r--r--)</div><div class="c" style="left:1364px;top:780px;letter-spacing:-0.12px">royalbakers (1…</div>
<div id="pager" class="abs"></div>
<svg class="abs" style="left:286px;top:938px" width="420" height="29" viewBox="286 938 420 29">
<g fill="#9b9b9b">
<path d="M316.200 946.600v16.600l-14.700-8.300z"/>
<rect x="338.200" y="948.800" width="2.700" height="12.800"/>
<path d="M354.300 949.400v11.400l-9.300-5.700z"/>
<path d="M511.300 946.600v15.600l14.800-7.800z"/>
<path d="M548.300 948.400v11.600l11.100-5.800z"/>
<rect x="561.700" y="947.800" width="2.700" height="13.200"/>
</g>
<g fill="none" stroke="#3d85c6" stroke-width="2.200">
<path d="M601.500 956.200a5 5 0 0 1 8.800-4.800"/>
<path d="M610.500 952.700a5 5 0 0 1-8.800 4.800"/>
</g>
<path d="M598.300 954.200l6.400.4-3.900 4.300z" fill="#3d85c6"/>
<path d="M613.600 954.800l-6.400-.4 3.900-4.300z" fill="#3d85c6"/>
<rect x="647" y="943" width="47" height="1" fill="#c9c9c9"/>
</svg>
<div class="psep" style="left:370px;top:947px;height:16px"></div>
<div class="psep" style="left:492px;top:947px;height:16px"></div>
<div class="psep" style="left:579px;top:947px;height:16px"></div>
<div class="psep" style="left:628px;top:946px;height:16px"></div>
<div class="abs" style="left:413px;top:943px;width:47px;height:24px;background:linear-gradient(#eef1f6,#fff 6px);border:1px solid #b5b8c8;border-bottom:0"></div>
<div class="pt" style="left:379px;top:946px">Page</div>
<div class="pt" style="left:448px;top:947px">1</div>
<div class="pt" style="left:463px;top:946px">of 1</div>
<div class="pt" style="left:652px;top:947px">Done.</div>
<div class="pt" style="left:1354px;top:946px;letter-spacing:-0.12px">Displaying Items 1 - 13 of 13</div>
<div id="right" class="abs"></div>
<div id="sep" class="abs"></div>
<div id="recent" class="abs"><span>Recent Files</span></div>
<div id="vsb" class="abs"></div>
<div id="thumb" class="abs"></div>
<svg class="abs" style="left:1899px;top:161px" width="18" height="786" viewBox="1899 161 18 786">
<path d="M1908.500 167.900l5.600 8h-11.200z" fill="#8b8b8b" stroke="#8b8b8b" stroke-width="1.600" stroke-linejoin="round"/>
<path d="M1908.500 942l-5.500-8.400h11z" fill="#8b8b8b" stroke="#8b8b8b" stroke-width="1.600" stroke-linejoin="round"/>
</svg>
<svg class="abs" style="left:1545px;top:172px" width="210" height="375" viewBox="1545 172 210 375">
<!-- new file -->
<g fill="none" stroke="#181200" stroke-width="2.400">
<path d="M1572.400 189v-7h-10.400l-4.300 4.300v13h7.700"/>
<path d="M1565 195.400h12M1571 189.600v11.400" stroke-width="3"/>
</g>
<!-- copy -->
<g fill="none" stroke="#9a7705" stroke-width="1.600">
<rect x="1724" y="180.200" width="13" height="16.200" rx="2"/>
<rect x="1732" y="186.300" width="12.800" height="16.200" rx="2" stroke="#6f5504"/>
<path d="M1727.500 184h5.500M1727 187.500c0 5 3 7.300 8.500 7.300" />
</g>
<path d="M1735.500 191.600l4.200 3.200-4.200 3.200z" fill="#6f5504"/>
<!-- move -->
<g fill="none" stroke="#6f5504" stroke-width="1.900">
<path d="M1553 240.400h6.800l3.600 3.600v11.300h-10.400z"/>
<path d="M1567 240.400h7l3.600 3.600v11.300h-10.600z"/>
<path d="M1559.500 247.900h10.500"/>
</g>
<path d="M1569.200 244.600l4 3.300-4 3.300z" fill="#6f5504"/>
<!-- upload -->
<g fill="none" stroke="#181200" stroke-width="2.500">
<path d="M1731.300 245.800h-3.900v11.500h15.700v-11.500h-3.900"/>
<path d="M1735.300 252v-12.500" stroke-width="2.300"/>
<path d="M1731 243.200l4.300-4.300 4.300 4.300" stroke-width="2.300"/>
</g>
<!-- download -->
<g fill="none" stroke="#6f5504" stroke-width="2.200">
<path d="M1561.700 307h-3.500v-10.900h15.700v10.900h-3.500"/>
<path d="M1566.100 300.800v13.500"/>
<path d="M1561.800 311.400l4.300 3.700 4.300-3.700"/>
</g>
<!-- delete -->
<g fill="none" stroke="#6f5504" stroke-width="1.900">
<path d="M1724.300 297.600h21.400"/>
<path d="M1731 297.200v-1.700q0-1.400 1.400-1.400h5.600q1.400 0 1.400 1.400v1.700"/>
<path d="M1727.800 298v14q0 2.300 2.300 2.300h9.800q2.300 0 2.300-2.300v-14" stroke-width="2.100"/>
<path d="M1731.700 302.200v9.300M1735 302.200v9.300M1738.300 302.200v9.300" stroke-width="1.700"/>
</g>
<!-- search -->
<g fill="none" stroke="#181200">
<circle cx="1557.700" cy="358.200" r="3.900" stroke-width="2.200"/>
<path d="M1560.800 360.600l9.200 5.600" stroke-width="2.800"/>
</g>
<!-- rename -->
<g fill="none" stroke="#6f5504" stroke-width="1.800">
<path d="M1738 357.500h-14.800v8h14.800"/>
<path d="M1743.400 357.500h3.800v8h-3.800"/>
<path d="M1740.600 351.800v18.600"/>
<path d="M1736.600 351.200q2.800 0 4 1.800 1.200-1.800 4-1.800M1736.600 371q2.800 0 4-1.800 1.200 1.800 4 1.800" stroke-width="1.500"/>
</g>
<rect x="1726.200" y="359.900" width="6.600" height="3" fill="#6f5504"/>
<!-- edit -->
<g fill="none" stroke="#6f5504" stroke-width="2.400">
<path d="M1562 411h-6.500v15.200h16.700v-7"/>
</g>
<path d="M1560.500 422.300l1.200-4.200 11.600-10.800 3.200 3.400-11.600 10.700z" fill="#6f5504"/>
<path d="M1574.300 406.300l1.300-1.200 3.200 3.400-1.300 1.200z" fill="#6f5504"/>
<!-- chmod -->
<g fill="none" stroke="#6f5504" stroke-width="2.300">
<path d="M1737.800 411.700h-12.500v11.800M1745.400 417.500v6"/>
<path d="M1722.300 425.100h26" stroke-width="2.500"/>
</g>
<circle cx="1743.700" cy="411.800" r="3.900" fill="#6f5504"/>
<circle cx="1745" cy="410.600" r="1" fill="#ffc107"/>
<path d="M1741.700 412.200l-10 6.200" stroke="#6f5504" stroke-width="3" fill="none"/>
<!-- view -->
<g fill="none" stroke="#6f5504" stroke-width="1.700">
<path d="M1559.400 463.600h12.600v12"/>
<path d="M1559 466.500h10.500v5M1567 483.400h-10.800v-14l2.800-2.900"/>
<path d="M1559.300 471h6.800M1559.300 474.300h6.800M1559.300 477.600h5M1559.300 480.700h4.500" stroke-width="1.500"/>
</g>
<circle cx="1571" cy="480.200" r="4.300" fill="#6f5504"/>
<ellipse cx="1571" cy="480.200" rx="2.700" ry="1.600" fill="#9a7705"/>
<!-- extract -->
<g fill="none" stroke="#6f5504" stroke-width="2.500">
<path d="M1729.500 468.500h-4.900v11.100h16.300v-3.500"/>
</g>
<path d="M1745.600 469.600l-6.300-5v3c-6.500.4-10 3.800-10.600 9.400 2.600-3.300 5.800-4.700 10.600-4.700v3.200z" fill="#6f5504"/>
<!-- compress -->
<g fill="#6f5504">
<path d="M1557.600 517.400h16.700v3.300h-12.400v10.500h12.400v3h-16.700z"/>
<rect x="1564" y="522.600" width="10.300" height="2.900"/>
<rect x="1567.900" y="525.500" width="1.700" height="15.200"/>
<rect x="1565" y="540.200" width="7.700" height="1.500"/>
</g>
</svg>

<div class="rt" style="left:1582px;top:177px;letter-spacing:0.0px">New File /</div>
<div class="rt" style="left:1569px;top:202px;letter-spacing:0.3px">Directory</div>
<div class="rt dis" style="left:1751px;top:180px;letter-spacing:-0.2px">Copy Files</div>
<div class="rt dis" style="left:1582px;top:236px;letter-spacing:0.0px">Move Files</div>
<div class="rt" style="left:1751px;top:236px;letter-spacing:0.1px">Upload Files</div>
<div class="rt dis" style="left:1582px;top:293px;letter-spacing:0.2px">Download Files</div>
<div class="rt dis" style="left:1751px;top:293px;letter-spacing:0.0px">Delete Files</div>
<div class="rt" style="left:1582px;top:349px;letter-spacing:0.0px">Search</div>
<div class="rt dis" style="left:1751px;top:349px;letter-spacing:0.1px">Rename</div>
<div class="rt dis" style="left:1582px;top:405px;letter-spacing:0.0px">Edit File</div>
<div class="rt dis" style="left:1751px;top:405px;letter-spacing:0.4px">Chmod</div>
<div class="rt dis" style="left:1582px;top:461px;letter-spacing:0.0px">View</div>
<div class="rt dis" style="left:1751px;top:461px;letter-spacing:0.1px">Extract</div>
<div class="rt dis" style="left:1582px;top:518px;letter-spacing:0.2px">Compress</div>
</body>
</html>
